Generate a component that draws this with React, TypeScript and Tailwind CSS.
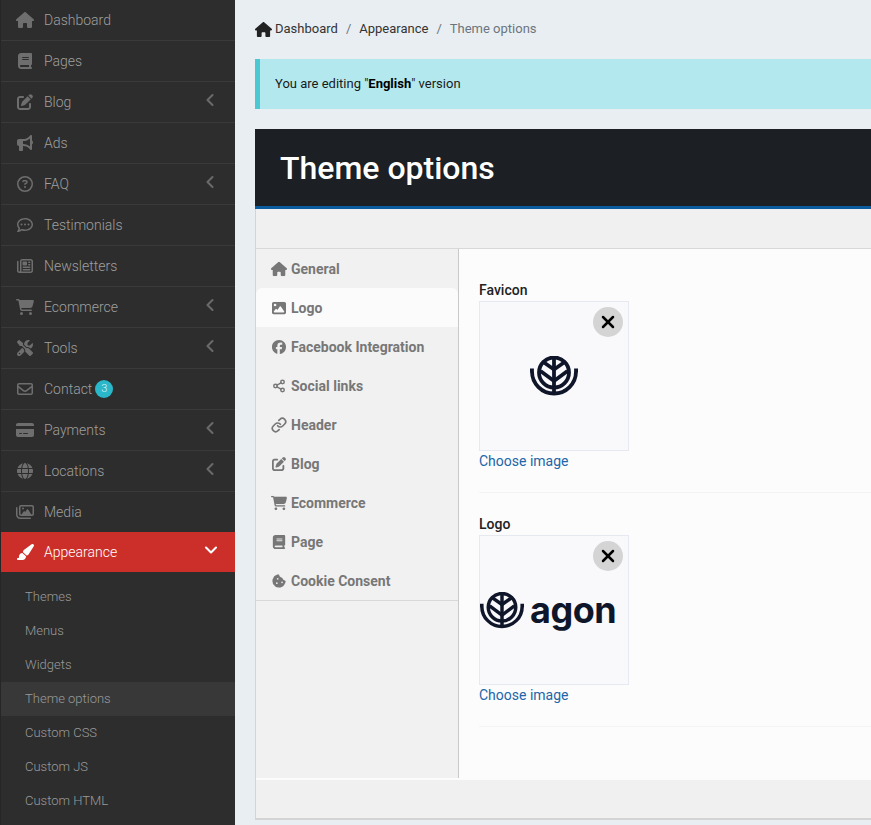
import { ChevronDown, ChevronLeft, Link as LinkIcon, Share2, X } from 'lucide-react';
import { FaHouse, FaBook, FaPenToSquare, FaBullhorn, FaRegCircleQuestion, FaRegCommentDots, FaRegNewspaper, FaCartShopping, FaScrewdriverWrench, FaRegEnvelope, FaCreditCard, FaGlobe, FaRegImages, FaPaintbrush, FaImage, FaFacebook, FaCookieBite } from 'react-icons/fa6';

const menu = [
  { label: 'Dashboard', icon: FaHouse, size: 18 },
  { label: 'Pages', icon: FaBook, size: 16 },
  { label: 'Blog', icon: FaPenToSquare, size: 16, arrow: true },
  { label: 'Ads', icon: FaBullhorn, size: 16 },
  { label: 'FAQ', icon: FaRegCircleQuestion, size: 16, arrow: true },
  { label: 'Testimonials', icon: FaRegCommentDots, size: 16 },
  { label: 'Newsletters', icon: FaRegNewspaper, size: 16 },
  { label: 'Ecommerce', icon: FaCartShopping, size: 18, arrow: true },
  { label: 'Tools', icon: FaScrewdriverWrench, size: 16, arrow: true },
  { label: 'Contact', icon: FaRegEnvelope, size: 16, badge: '3' },
  { label: 'Payments', icon: FaCreditCard, size: 18, arrow: true },
  { label: 'Locations', icon: FaGlobe, size: 16, arrow: true },
  { label: 'Media', icon: FaRegImages, size: 18 },
];

const subMenu = ['Themes', 'Menus', 'Widgets', 'Theme options', 'Custom CSS', 'Custom JS', 'Custom HTML'];

const tabs = [
  { label: 'General', icon: FaHouse, size: 16 },
  { label: 'Logo', icon: FaImage, size: 14, active: true },
  { label: 'Facebook Integration', icon: FaFacebook, size: 14 },
  { label: 'Social links', icon: Share2, size: 14 },
  { label: 'Header', icon: LinkIcon, size: 16 },
  { label: 'Blog', icon: FaPenToSquare, size: 14 },
  { label: 'Ecommerce', icon: FaCartShopping, size: 16 },
  { label: 'Page', icon: FaBook, size: 14 },
  { label: 'Cookie Consent', icon: FaCookieBite, size: 14 },
];

const LeafMark = ({ className }: { className: string }) => (
  <svg viewBox="0 0 48 40" className={className} fill="none" stroke="#10162a" strokeWidth="3.8">
    <circle cx="24" cy="16.5" r="15" />
    <path d="M24 1.5V39" />
    <path d="M24 13.5L14 6.5M24 13.5L34 6.5" />
    <path d="M24 25L10.5 15M24 25L37.5 15" />
    <path d="M0 14.5H2V15.5A22 22 0 0 0 46 15.5V14.5H48" />
  </svg>
);

const ImageField = ({ label, logo }: { label: string; logo?: boolean }) => (
  <div className="h-[234px] border-b border-[#f3f3f3] pt-[23px]">
    <div className="text-sm leading-[16px] font-medium text-[#222]">{label}</div>
    <div className="relative mt-[3px] h-[150px] w-[150px] border border-[#e6e9ef] bg-[#f9f9fc]">
      {logo ? (
        <div className="flex h-full items-center">
          <LeafMark className="h-[37px] w-[44px]" />
          <span className="mt-[-1px] ml-[6px] font-['Inter',sans-serif] text-[36px] leading-none font-bold tracking-[-0.5px] text-[#10162a]">agon</span>
        </div>
      ) : (
        <div className="flex h-full items-center justify-center">
          <LeafMark className="h-[40px] w-[48px]" />
        </div>
      )}
      <div className="absolute top-[5px] right-[5px] flex h-[30px] w-[30px] items-center justify-center rounded-full bg-[#d4d4d4]">
        <X size={20} strokeWidth={3} className="text-black" />
      </div>
    </div>
    <div className="text-sm leading-[20px] text-[#2265a8]">Choose image</div>
  </div>
);

export default function App() {
  return (
    <div className="flex h-[825px] w-[871px] overflow-hidden bg-[#e9eef2] font-['Roboto',sans-serif]">
      <aside className="w-[235px] shrink-0 border-l border-[#262626] bg-[#2d2d2d]">
        <div>
          {menu.map(item => (
            <div key={item.label} className="flex h-[41px] items-center border-b border-[#3a3a3a] pr-[15px] pl-[14px] text-[#9f9f9f] last:h-[40px] last:border-b-0">
              <span className="flex w-[20px] justify-center text-[#6e6e6e]"><item.icon size={item.size} className="shrink-0" /></span>
              <span className="ml-[9px] text-sm font-light">{item.label}</span>
              {item.badge && (
                <span className="ml-[3px] flex h-[18px] w-[18px] items-center justify-center rounded-full bg-[#2ab7ca] text-[11px] font-light text-[#d8f4f7]">{item.badge}</span>
              )}
              {item.arrow && <ChevronLeft size={20} strokeWidth={2.5} className="mb-[4px] ml-auto text-[#6a6a6a]" />}
            </div>
          ))}
        </div>
        <div className="flex h-[40px] items-center bg-[#cc2f29] pr-[14px] pl-[14px] text-white">
          <span className="flex w-[20px] justify-center"><FaPaintbrush size={18} className="shrink-0" /></span>
          <span className="ml-[9px] text-sm font-light">Appearance</span>
          <ChevronDown size={20} strokeWidth={2.5} className="mb-[4px] ml-auto" />
        </div>
        <div className="pt-[8px]">
          {subMenu.map(name => (
            <div key={name} className={`flex h-[34px] items-center pl-[24px] text-[13px] font-light text-[#9a9a9a] ${name === 'Theme options' ? 'bg-[#383838]' : ''}`}>
              {name}
            </div>
          ))}
        </div>
      </aside>

      <main className="min-w-0 flex-1 pl-[20px]">
        <div className="flex h-[59px] items-center pb-[1px] text-[13px]">
          <FaHouse size={17} className="mr-[3px] shrink-0 text-[#222]" />
          <span className="text-[#333]">Dashboard</span>
          <span className="mx-[8px] text-[#6c757d]">/</span>
          <span className="text-[#333]">Appearance</span>
          <span className="mx-[8px] text-[#6c757d]">/</span>
          <span className="text-[#6c757d]">Theme options</span>
        </div>
        <div className="flex h-[50px] items-center border-l-[5px] border-[#4cc8d2] bg-[#b3e9ee] pl-[15px] text-[13px] text-[#1a1a1a]">
          <span>You are editing "<b className="font-bold text-black">English</b>" version</span>
        </div>
        <div className="mt-[20px] flex h-[80px] items-center border-b-[3px] border-[#0b5c9e] bg-[#1c1f24] pl-[25px]">
          <h1 className="text-[32px] leading-none font-medium text-white">Theme options</h1>
        </div>
        <div className="border-b-2 border-l border-[#d4d4d4] bg-[#f0f0f0]">
          <div className="h-[40px] border-b border-[#d8d8d8]" />
          <div className="flex h-[531px] border-b-2 border-[#fbfbfb]">
            <nav className="w-[203px] shrink-0 border-r border-[#c9c9c9] bg-[#f1f1f1]">
              <div className="border-b border-[#d8d8d8]">
                {tabs.map(tab => (
                  <div key={tab.label} className={`flex h-[39px] items-center pl-[15px] text-sm font-bold text-[#777] ${tab.active ? 'rounded-t-[6px] bg-[#fbfbfb]' : ''}`}>
                    <span className="flex w-[16px] justify-center"><tab.icon size={tab.size} strokeWidth={2.5} className="shrink-0" /></span>
                    <span className="ml-[4px]">{tab.label}</span>
                  </div>
                ))}
              </div>
            </nav>
            <div className="flex-1 bg-[#fcfcfc] pt-[10px] pl-[20px]">
              <ImageField label="Favicon" />
              <ImageField label="Logo" logo />
            </div>
          </div>
          <div className="h-[38px]" />
        </div>
      </main>
    </div>
  );
}
